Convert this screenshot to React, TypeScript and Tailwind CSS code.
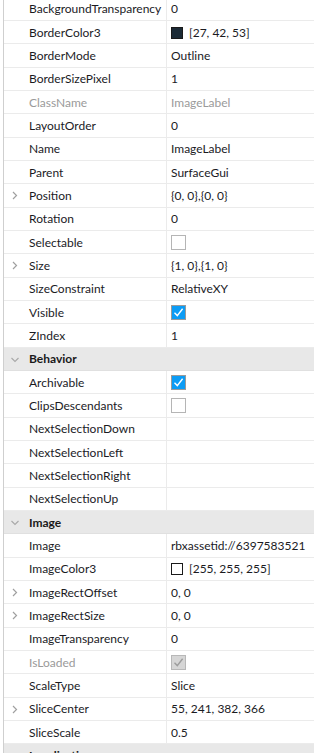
import React from 'react';

type Row =
  | { kind: 'header'; label: string }
  | {
      kind: 'prop';
      label: string;
      value?: string;
      expand?: boolean;
      disabled?: boolean;
      check?: 'on' | 'off' | 'locked';
      swatch?: string;
    };

const rows: Row[] = [
  { kind: 'prop', label: 'BackgroundTransparency', value: '0' },
  { kind: 'prop', label: 'BorderColor3', value: '[27, 42, 53]', swatch: '#1b2a35' },
  { kind: 'prop', label: 'BorderMode', value: 'Outline' },
  { kind: 'prop', label: 'BorderSizePixel', value: '1' },
  { kind: 'prop', label: 'ClassName', value: 'ImageLabel', disabled: true },
  { kind: 'prop', label: 'LayoutOrder', value: '0' },
  { kind: 'prop', label: 'Name', value: 'ImageLabel' },
  { kind: 'prop', label: 'Parent', value: 'SurfaceGui' },
  { kind: 'prop', label: 'Position', value: '{0, 0},{0, 0}', expand: true },
  { kind: 'prop', label: 'Rotation', value: '0' },
  { kind: 'prop', label: 'Selectable', check: 'off' },
  { kind: 'prop', label: 'Size', value: '{1, 0},{1, 0}', expand: true },
  { kind: 'prop', label: 'SizeConstraint', value: 'RelativeXY' },
  { kind: 'prop', label: 'Visible', check: 'on' },
  { kind: 'prop', label: 'ZIndex', value: '1' },
  { kind: 'header', label: 'Behavior' },
  { kind: 'prop', label: 'Archivable', check: 'on' },
  { kind: 'prop', label: 'ClipsDescendants', check: 'off' },
  { kind: 'prop', label: 'NextSelectionDown' },
  { kind: 'prop', label: 'NextSelectionLeft' },
  { kind: 'prop', label: 'NextSelectionRight' },
  { kind: 'prop', label: 'NextSelectionUp' },
  { kind: 'header', label: 'Image' },
  { kind: 'prop', label: 'Image', value: 'rbxassetid://6397583521' },
  { kind: 'prop', label: 'ImageColor3', value: '[255, 255, 255]', swatch: '#ffffff' },
  { kind: 'prop', label: 'ImageRectOffset', value: '0, 0', expand: true },
  { kind: 'prop', label: 'ImageRectSize', value: '0, 0', expand: true },
  { kind: 'prop', label: 'ImageTransparency', value: '0' },
  { kind: 'prop', label: 'IsLoaded', check: 'locked', disabled: true },
  { kind: 'prop', label: 'ScaleType', value: 'Slice' },
  { kind: 'prop', label: 'SliceCenter', value: '55, 241, 382, 366', expand: true },
  { kind: 'prop', label: 'SliceScale', value: '0.5' },
  { kind: 'header', label: 'Localization' },
  { kind: 'prop', label: 'AutoLocalize', check: 'on' },
];

const Chevron = ({ down }: { down?: boolean }) => (
  <svg width="8" height="9" viewBox="0 0 8 9" className="shrink-0">
    {down ? (
      <path d="M0.5 3 L4 6.5 L7.5 3" fill="none" stroke="#a8a8a8" strokeWidth="1.1" />
    ) : (
      <path d="M2 1 L5.5 4.5 L2 8" fill="none" stroke="#a0a0a0" strokeWidth="1.2" />
    )}
  </svg>
);

const Check = ({ state }: { state: 'on' | 'off' | 'locked' }) => {
  if (state === 'off')
    return <div className="w-[15px] h-[15px] border border-[#b5b5b5] bg-white" />;
  const locked = state === 'locked';
  return (
    <div
      className={
        locked
          ? 'w-[15px] h-[15px] border border-[#b8b8b8] bg-[#d6d6d6] flex items-center justify-center'
          : 'w-[15px] h-[15px] border border-[#9a9a9a] bg-[#0c9cf5] flex items-center justify-center'
      }
    >
      <svg width="11" height="11" viewBox="0 0 11 11">
        <path
          d="M1.5 5.8 L4.3 8.6 L9.6 1.8"
          fill="none"
          stroke={locked ? '#9d9d9d' : '#ffffff'}
          strokeWidth="1.4"
        />
      </svg>
    </div>
  );
};

export default function App() {
  return (
    <div
      className="w-[314px] h-[753px] overflow-hidden bg-white text-[12px] text-[#1b1b1f]"
      style={{ fontFamily: 'Lato, "Noto Sans", sans-serif' }}
    >
      <div className="ml-[3px] border-l border-[#cfcfcf] -mt-[2.33px]">
        {rows.map((r, i) =>
          r.kind === 'header' ? (
            <div
              key={i}
              className="h-[23.33px] pt-[1px] flex items-center bg-[#e8e8e8] border-b border-[#e0e0e0]"
            >
              <div className="w-[25px] flex justify-start pl-[7px]">
                <Chevron down />
              </div>
              <span className="font-bold text-[#1a1a1a]">{r.label}</span>
            </div>
          ) : (
            <div key={i} className="h-[23.33px] flex border-b border-[#ebebeb]">
              <div className="w-[163px] shrink-0 flex items-center pt-[1px] border-r border-[#ebebeb]">
                <div className="w-[25px] flex justify-start pl-[7px]">
                  {r.expand && <Chevron />}
                </div>
                <span className={r.disabled ? 'text-[#9a9a9a]' : ''}>{r.label}</span>
              </div>
              <div className="flex-1 flex items-center pt-[1px] pl-[4px] gap-[6px]">
                {r.swatch && (
                  <div
                    className="w-[12px] h-[12px] border border-[#1a1a1a]"
                    style={{ backgroundColor: r.swatch }}
                  />
                )}
                {r.check && <Check state={r.check} />}
                {r.value && (
                  <span className={r.disabled ? 'text-[#9a9a9a]' : ''}>{r.value}</span>
                )}
              </div>
            </div>
          )
        )}
      </div>
    </div>
  );
}
